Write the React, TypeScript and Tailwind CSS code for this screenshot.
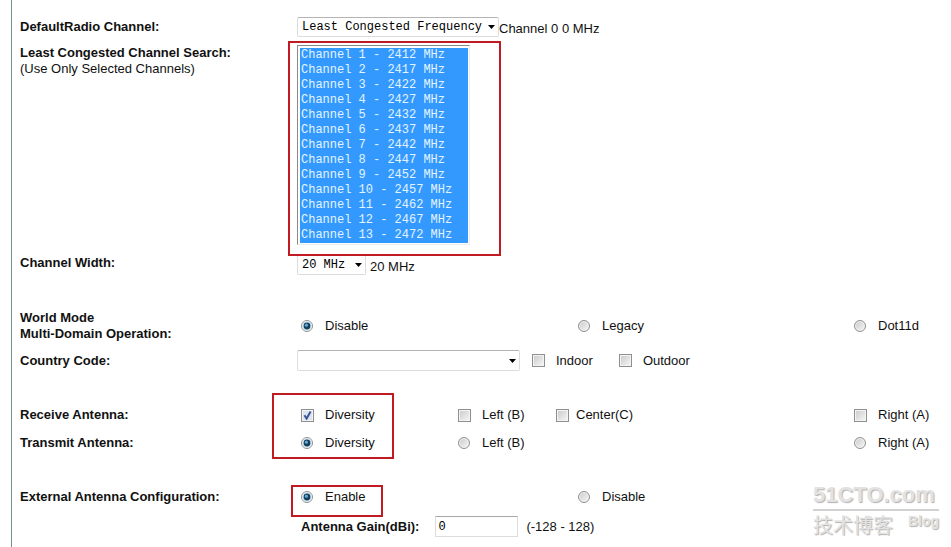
import type { ReactNode } from "react";

const CHANNELS = Array.from({ length: 13 }, (_, i) => ({
  id: String(i + 1),
  label: `Channel ${i + 1} - ${2412 + i * 5} MHz`,
}));

const ALL_CHANNELS = CHANNELS.map((c) => c.id);

function Row({
  label,
  htmlFor,
  className = "",
  children,
}: {
  label: ReactNode;
  htmlFor?: string;
  className?: string;
  children: ReactNode;
}) {
  return (
    <div className={`flex ${className}`}>
      <div className="w-[277px] shrink-0 font-bold">
        {htmlFor ? <label htmlFor={htmlFor}>{label}</label> : label}
      </div>
      <div className="min-w-0 flex-1">{children}</div>
    </div>
  );
}

function Choice({
  type,
  name,
  label,
  checked,
  tight,
}: {
  type: "radio" | "checkbox";
  name: string;
  label: string;
  checked?: boolean;
  tight?: boolean;
}) {
  const shape = type === "radio" ? "h-3 w-3 rounded-full" : "h-[13px] w-[13px]";
  const gap = tight ? "gap-[7px]" : type === "radio" ? "gap-3" : "gap-[11px]";

  return (
    <label className={`flex items-center whitespace-nowrap ${gap}`}>
      <span className="relative flex">
        <input
          type={type}
          name={name}
          defaultChecked={checked}
          className={`peer appearance-none border border-[#8e8f8f] bg-linear-to-br from-[#c9c9c9] to-[#f8f8f8] shadow-[inset_0_0_0_1px_#f4f4f4] ${shape}`}
        />
        {type === "radio" ? (
          <svg
            viewBox="0 0 12 12"
            className="pointer-events-none absolute inset-0 hidden h-3 w-3 peer-checked:block"
            aria-hidden
          >
            <circle cx="6" cy="6" r="5" fill="#d5e6f0" />
            <circle cx="6" cy="6" r="3.4" fill="#163f5e" />
            <circle cx="5.4" cy="5.2" r="1.6" fill="#5fa9cf" />
          </svg>
        ) : (
          <svg
            viewBox="0 0 13 13"
            className="pointer-events-none absolute inset-0 hidden h-[13px] w-[13px] peer-checked:block"
            aria-hidden
          >
            <rect x="2" y="2" width="9" height="9" fill="#dde5f2" />
            <path d="M3.4 6.2l2.2 3.4L9.6 2.6" fill="none" stroke="#3f5794" strokeWidth="2" />
          </svg>
        )}
      </span>
      {label}
    </label>
  );
}

function Dropdown({
  id,
  options,
  className,
}: {
  id: string;
  options: string[];
  className: string;
}) {
  return (
    <span className={`relative inline-flex ${className}`}>
      <select
        id={id}
        className="w-full appearance-none rounded-xs border border-[#dcdcdc] border-t-[#b4b4b4] bg-white pl-1 font-['Liberation_Mono',monospace] text-xs text-black"
      >
        {options.map((o) => (
          <option key={o}>{o}</option>
        ))}
      </select>
      <svg
        viewBox="0 0 7 4"
        className="pointer-events-none absolute inset-y-0 right-1 my-auto h-1 w-[7px]"
        aria-hidden
      >
        <path d="M0 0h7L3.5 4z" fill="#000" />
      </svg>
    </span>
  );
}

function Highlight({ className }: { className: string }) {
  return (
    <div
      className={`pointer-events-none absolute z-10 border-2 border-[#c11a20] ${className}`}
      aria-hidden
    />
  );
}

function Watermark() {
  return (
    <div
      className="pointer-events-none absolute right-3 bottom-2 w-[126px] text-[#e2e2e2] [text-shadow:1px_1px_1px_#b0b0b0]"
      aria-hidden
    >
      <div className="border-b-2 border-[#d2d2d2] text-[22px] leading-7 font-bold">
        51CTO.com
      </div>
      <div className="flex items-start justify-between">
        <span className="font-['Noto_Sans_CJK_SC',sans-serif] text-xl leading-7">
          技术博客
        </span>
        <span className="text-sm leading-5 font-bold">Blog</span>
      </div>
    </div>
  );
}

export default function App() {
  return (
    <main className="relative ml-[11px] min-h-screen border-l border-[#71918a] bg-white pt-[17px] pl-2 font-['Liberation_Sans',Arial,sans-serif] text-[13px] leading-4 text-[#111]">
      <Row label="DefaultRadio Channel:" htmlFor="radio-channel" className="items-center">
        <div className="flex items-center">
          <Dropdown
            id="radio-channel"
            options={["Least Congested Frequency", ...CHANNELS.map((c) => c.label)]}
            className="h-5 w-[202px]"
          />
          <span className="pt-1">Channel 0 0 MHz</span>
        </div>
      </Row>

      <Row
        label={
          <>
            Least Congested Channel Search:
            <span className="block font-normal">(Use Only Selected Channels)</span>
          </>
        }
        htmlFor="channel-search"
        className="mt-2"
      >
        <div className="relative w-[173px]">
          <select
            id="channel-search"
            multiple
            size={13}
            defaultValue={ALL_CHANNELS}
            className="block h-[200px] w-full appearance-none overflow-hidden border border-[#ececec] border-t-[#8a8a8a] border-l-[#8a8a8a] bg-white p-0.5 pr-px font-['Liberation_Mono',monospace] text-xs"
          >
            {CHANNELS.map((c) => (
              <option
                key={c.id}
                value={c.id}
                className="h-[15px] min-h-0 p-0 pl-px leading-[15px] checked:bg-[linear-gradient(#3399ff,#3399ff)] checked:text-[#e2f4ff]!"
              >
                {c.label}
              </option>
            ))}
          </select>
          <Highlight className="-top-1 -right-[31px] -bottom-[11px] -left-[9px]" />
        </div>
      </Row>

      <Row label="Channel Width:" htmlFor="channel-width" className="mt-2.5">
        <div className="flex items-center gap-1">
          <Dropdown id="channel-width" options={["20 MHz", "40 MHz"]} className="h-5 w-[69px]" />
          <span className="pt-1">20 MHz</span>
        </div>
      </Row>

      <Row
        label={
          <>
            World Mode
            <br />
            Multi-Domain Operation:
          </>
        }
        className="mt-[35px] items-center"
      >
        <div className="grid grid-cols-[277fr_276fr_97fr] pl-1">
          <Choice type="radio" name="world-mode" label="Disable" checked />
          <Choice type="radio" name="world-mode" label="Legacy" />
          <Choice type="radio" name="world-mode" label="Dot11d" />
        </div>
      </Row>

      <Row label="Country Code:" htmlFor="country" className="mt-2 items-center">
        <div className="flex items-center">
          <Dropdown id="country" options={[""]} className="mr-3 h-[21px] w-[223px]" />
          <div className="flex gap-[26px]">
            <Choice type="checkbox" name="indoor" label="Indoor" />
            <Choice type="checkbox" name="outdoor" label="Outdoor" />
          </div>
        </div>
      </Row>

      <div className="relative mt-9">
        <Row label="Receive Antenna:" className="items-center">
          <div className="grid grid-cols-[157fr_98fr_298fr_97fr] pl-1">
            <Choice type="checkbox" name="rx-diversity" label="Diversity" checked />
            <Choice type="checkbox" name="rx-left" label="Left (B)" />
            <Choice type="checkbox" name="rx-center" label="Center(C)" tight />
            <Choice type="checkbox" name="rx-right" label="Right (A)" />
          </div>
        </Row>
        <Row label="Transmit Antenna:" className="mt-3 items-center">
          <div className="grid grid-cols-[157fr_396fr_97fr] pl-1">
            <Choice type="radio" name="tx" label="Diversity" checked />
            <Choice type="radio" name="tx" label="Left (B)" />
            <Choice type="radio" name="tx" label="Right (A)" />
          </div>
        </Row>
        <Highlight className="-top-3.5 -bottom-2 left-[252px] w-[122px]" />
      </div>

      <Row label="External Antenna Configuration:" className="mt-[38px] items-center">
        <div className="grid grid-cols-[277fr_373fr] pl-1">
          <div className="relative">
            <Choice type="radio" name="external" label="Enable" checked />
            <Highlight className="-top-1 -bottom-3 -left-2.5 w-[92px]" />
          </div>
          <Choice type="radio" name="external" label="Disable" />
        </div>
      </Row>

      <Row label="" className="mt-[11px]">
        <div className="flex items-center pl-1">
          <label htmlFor="gain" className="font-bold">
            Antenna Gain(dBi):
          </label>
          <input
            id="gain"
            type="text"
            defaultValue="0"
            className="mr-2 ml-4 h-[21px] w-[83px] border border-[#dcdcdc] border-t-[#a8a8a8] bg-white px-0.5 font-['Liberation_Mono',monospace] text-xs text-black"
          />
          <span>(-128 - 128)</span>
        </div>
      </Row>

      <Watermark />
    </main>
  );
}
